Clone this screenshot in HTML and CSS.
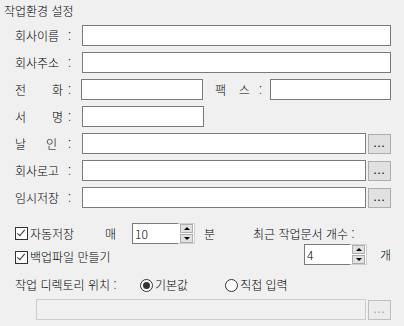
FILE: index.html
```html
<!DOCTYPE html>
<html lang="ko">
<head>
  <meta charset="UTF-8">
  <title>작업환경 설정</title>
  <meta name="viewport" content="width=device-width, initial-scale=1.0">
  <link rel="stylesheet" href="styles.css">
</head>
<body>
  <div class="dlg">
    <div class="title">작업환경 설정</div>

    <div class="row">
      <label class="lbl"><span class="chars">회사이름</span><span class="colon">:</span></label>
      <input class="txt wide" type="text">
    </div>

    <div class="row">
      <label class="lbl"><span class="chars">회사주소</span><span class="colon">:</span></label>
      <input class="txt wide" type="text">
    </div>

    <div class="row">
      <label class="lbl"><span class="chars"><span>전</span><span>화</span></span><span class="colon">:</span></label>
      <input class="txt short" type="text">
      <label class="lbl fax"><span class="chars"><span>팩</span><span>스</span></span><span class="colon">:</span></label>
      <input class="txt short2" type="text">
    </div>

    <div class="row">
      <label class="lbl"><span class="chars"><span>서</span><span>명</span></span><span class="colon">:</span></label>
      <input class="txt short" type="text">
    </div>

    <div class="row">
      <label class="lbl"><span class="chars narrow"><span>날</span><span>인</span></span><span class="colon">:</span></label>
      <input class="txt mid" type="text">
      <button class="dots">...</button>
    </div>

    <div class="row">
      <label class="lbl"><span class="chars">회사로고</span><span class="colon">:</span></label>
      <input class="txt mid" type="text">
      <button class="dots">...</button>
    </div>

    <div class="row">
      <label class="lbl"><span class="chars">임시저장</span><span class="colon">:</span></label>
      <input class="txt mid" type="text">
      <button class="dots">...</button>
    </div>

    <div class="opts">
      <div class="orow">
        <label class="chk auto"><span class="box checked"></span>자동저장</label>
        <span class="every">매</span>
        <div class="spin">
          <input class="spin-val" type="text" value="10">
          <div class="spin-btns">
            <span class="sb up"></span>
            <span class="sb down"></span>
          </div>
        </div>
        <span class="unit-min">분</span>
        <span class="recent">최근 작업문서 개수 :</span>
      </div>

      <div class="orow second">
        <label class="chk backup"><span class="box checked"></span>백업파일 만들기</label>
        <div class="spin">
          <input class="spin-val" type="text" value="4">
          <div class="spin-btns">
            <span class="sb up"></span>
            <span class="sb down"></span>
          </div>
        </div>
        <span class="unit-cnt">개</span>
      </div>
    </div>

    <div class="dirrow">
      <span class="dirlbl">작업 디렉토리 위치 :</span>
      <label class="radio"><span class="circle on"></span>기본값</label>
      <label class="radio direct"><span class="circle"></span>직접 입력</label>
    </div>

    <div class="row pathrow">
      <input class="txt path" type="text" disabled>
      <button class="dots" disabled>...</button>
    </div>
  </div>
</body>
</html>
```

FILE: styles.css
```css
html, body {
  margin: 0;
  background: #f0f0f0;
}

body {
  font-family: "Noto Sans CJK KR", "Noto Sans", sans-serif;
  font-size: 12px;
  font-weight: 300;
  color: #000;
  width: 404px;
  height: 326px;
  overflow: hidden;
}

.dlg {
  padding: 2px 13px 0 0;
}

.title {
  padding-left: 4px;
  height: 17px;
  line-height: 17px;
}

.row {
  display: flex;
  align-items: center;
  height: 21px;
  margin-top: 6px;
}

.lbl {
  display: flex;
  align-items: center;
  box-sizing: border-box;
  width: 82px;
  padding-left: 15px;
  line-height: 14px;
}

.chars {
  display: flex;
  justify-content: space-between;
  width: 48px;
}

.chars.narrow {
  width: 42px;
  margin-right: 6px;
}

.colon {
  margin-left: 5px;
}

.lbl.fax {
  width: 68px;
  padding-left: 12px;
}

.lbl.fax .chars {
  width: 35px;
}

.lbl.fax .colon {
  margin-left: 9px;
}

.txt {
  box-sizing: border-box;
  height: 21px;
  margin: 0;
  padding: 0 3px;
  border: 1px solid #7a7a7a;
  background: #fff;
  font: inherit;
  outline: none;
}

.txt.wide {
  width: 309px;
}

.txt.short {
  width: 122px;
}

.txt.short2 {
  width: 121px;
}

.txt.mid {
  width: 285px;
}

.dots {
  box-sizing: border-box;
  width: 23px;
  height: 20px;
  margin: 0 0 0 2px;
  padding: 0 0 4px;
  border: 1px solid #adadad;
  background: #e1e1e1;
  font: inherit;
  font-size: 11px;
  font-weight: 400;
  letter-spacing: 1px;
  line-height: 12px;
  color: #000;
}

.dots:disabled {
  border-color: #bfbfbf;
  background: #ececec;
  color: #a0a0a0;
}

/* options block */
.opts {
  margin-top: 15px;
}

.orow {
  display: flex;
  align-items: center;
  height: 21px;
}

.orow.second {
  margin-top: -1px;
  height: 22px;
}

.chk {
  display: flex;
  align-items: center;
  padding-left: 15px;
  line-height: 14px;
}

.chk.auto {
  width: 75px;
}

.chk.backup {
  width: 294px;
  margin-top: 6px;
}

.box {
  box-sizing: border-box;
  width: 13px;
  height: 13px;
  border: 1px solid #333;
  background: #fff;
  margin-right: 2px;
  position: relative;
}

.box.checked::after {
  content: "";
  position: absolute;
  left: 3px;
  top: 0px;
  width: 3px;
  height: 7px;
  border: solid #333;
  border-width: 0 1px 1px 0;
  transform: rotate(40deg);
}

.every {
  width: 27px;
  padding-left: 15px;
}

.spin {
  display: flex;
  align-items: center;
}

.spin-val {
  box-sizing: border-box;
  width: 46px;
  height: 21px;
  margin: 0;
  padding: 0 2px;
  border: 1px solid #7a7a7a;
  border-right: none;
  background: #fff;
  font: inherit;
  outline: none;
}

.spin-btns {
  display: flex;
  flex-direction: column;
  justify-content: center;
  gap: 1px;
  box-sizing: border-box;
  height: 21px;
  padding: 0 1px 0 2px;
  background: #fff;
  border: 1px solid #cfcfcf;
  border-left: none;
}

.sb {
  box-sizing: border-box;
  width: 13px;
  height: 9px;
  border: 1px solid #adadad;
  background: #e1e1e1;
  position: relative;
}

.sb::after {
  content: "";
  position: absolute;
  left: 3px;
  width: 0;
  height: 0;
  border-left: 3px solid transparent;
  border-right: 3px solid transparent;
}

.sb.up::after {
  top: 2px;
  border-bottom: 3px solid #000;
}

.sb.down::after {
  top: 2px;
  border-top: 3px solid #000;
}

.unit-min {
  padding-left: 9px;
  width: 39px;
}

.recent {
  padding-left: 10px;
}

.unit-cnt {
  padding-left: 13px;
}

/* work directory */
.dirrow {
  display: flex;
  align-items: center;
  height: 14px;
  margin-top: 13px;
  padding-left: 15px;
  line-height: 14px;
}

.dirlbl {
  width: 125px;
}

.radio {
  display: flex;
  align-items: center;
}

.radio.direct {
  margin-left: 37px;
}

.circle {
  box-sizing: border-box;
  width: 13px;
  height: 13px;
  border: 1px solid #333;
  border-radius: 50%;
  background: #fff;
  margin-right: 2px;
  position: relative;
}

.circle.on::after {
  content: "";
  position: absolute;
  left: 2px;
  top: 2px;
  width: 7px;
  height: 7px;
  border-radius: 50%;
  background: #333;
}

.row.pathrow {
  margin-top: 7px;
  padding-left: 36px;
}

.txt.path {
  width: 331px;
  border-color: #cccccc;
  background: #f0f0f0;
}
```
